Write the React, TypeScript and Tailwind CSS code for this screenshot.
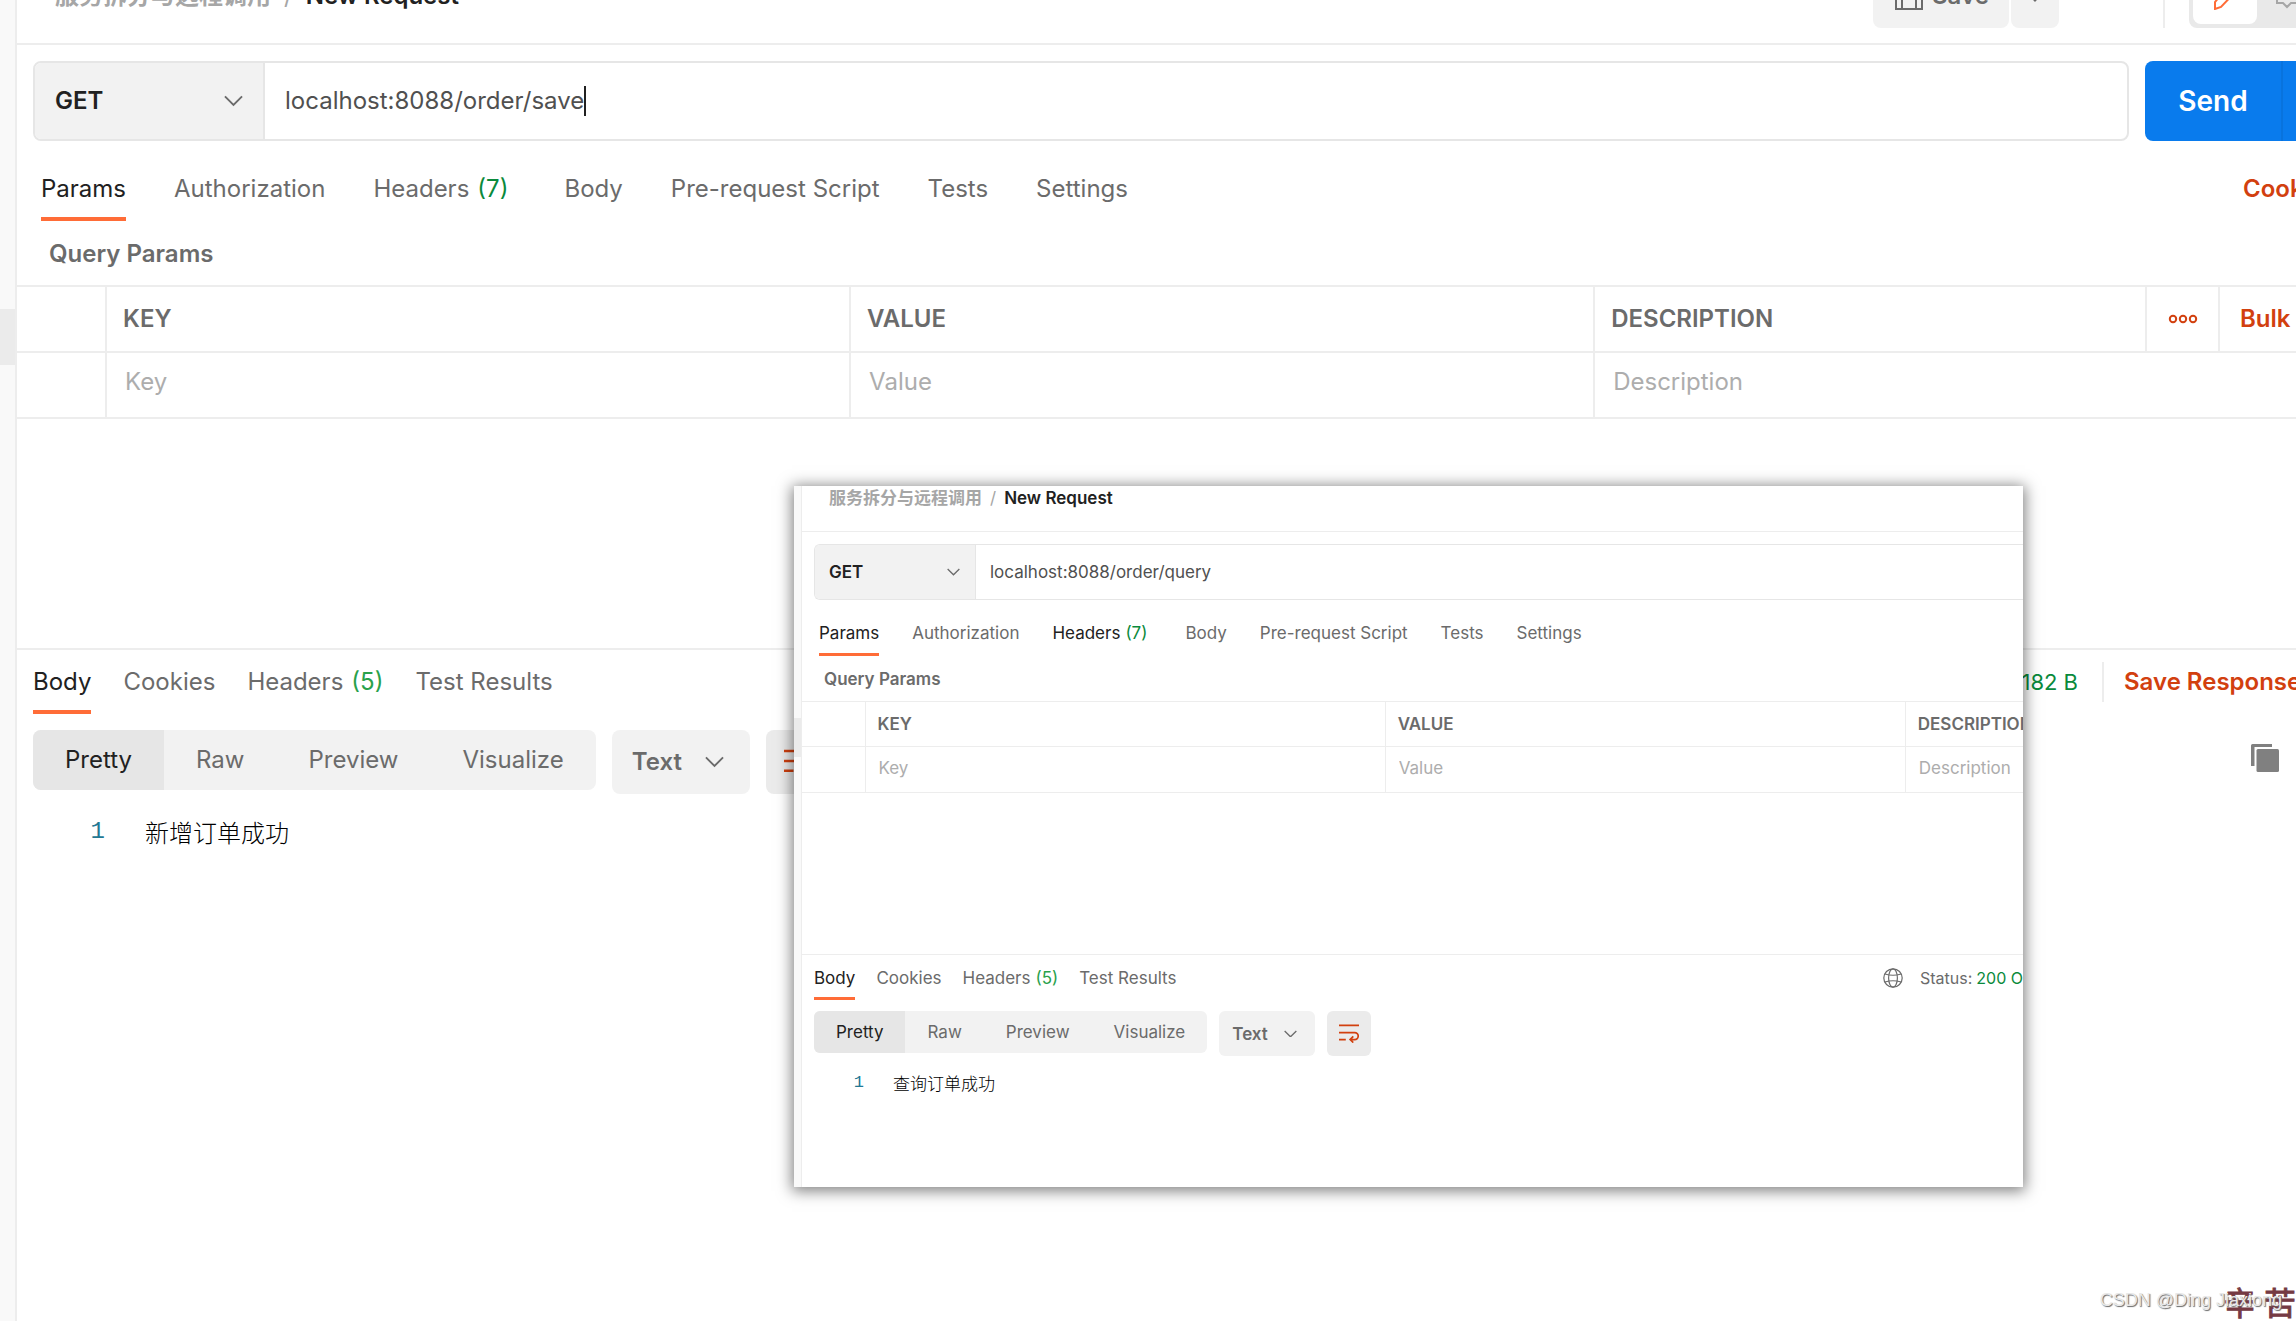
import React from 'react';

type Size = 'lg' | 'sm';

const sizes = {
  lg: {
    text: 'text-[24px] leading-[30px]',
    rail: 'w-[17px] border-r-2 pt-[309px]',
    thumb: 'h-[56px]',
    header: 'h-[45px] border-b-2 pb-[15px] pl-[38px]',
    crumbs: 'h-[64px] gap-[13px]',
    urlRow: 'mt-4 pl-4',
    urlBox: 'h-[80px] border-2 rounded-lg mr-4',
    method: 'w-[230px] border-r-2 px-5',
    methodChevron: 'right-[22px] w-[19px]',
    url: 'pl-5',
    tabs: 'mt-[14px] pl-[24px]',
    tabList: 'gap-12',
    tab: 'h-[66px] border-b-4 pt-[6px] gap-[8px]',
    counted: 'pr-2',
    section: 'h-[64px] pl-8 pt-[2px]',
    table: 'border-y-2',
    headRow: 'h-[66px] border-b-2',
    bodyRow: 'h-[66px]',
    cell: 'border-r-2',
    selectCol: 'w-[89px]',
    fieldCol: 'w-[32.65%]',
    headPad: 'pl-4',
    bodyPad: 'pl-[18px] pb-[6px]',
    gap: 'h-[231px] border-b-2',
    resTabs: 'pl-4',
    resTabList: 'gap-8',
    resTab: 'h-[64px] border-y-4 gap-[8px]',
    toolbar: 'mt-4 pl-4 gap-4',
    segmented: 'h-[60px] rounded-lg',
    segment: 'px-8',
    format: 'w-[138px] h-[64px] rounded-lg pl-5',
    formatChevron: 'right-[26px] w-[19px]',
    wrap: 'w-[64px] h-[64px] rounded-lg',
    wrapIcon: 'w-[28px]',
    code: 'mt-5 leading-[36px]',
    lineNo: 'w-[88px] text-[24px]',
    codeText: 'pl-[40px] text-[24px]',
  },
  sm: {
    text: 'text-[17px] leading-[22px]',
    rail: 'w-[8px] border-r pt-[232px]',
    thumb: 'h-[39px]',
    header: 'h-[46px] border-b pb-[11px] pl-[27px]',
    crumbs: 'h-[45px] gap-[8px]',
    urlRow: 'mt-3 pl-3',
    urlBox: 'h-[56px] border border-r-0 rounded-l-md',
    method: 'w-[161px] border-r px-[14px]',
    methodChevron: 'right-[16px] w-[13px]',
    url: 'pl-[14px]',
    tabs: 'mt-[10px] pl-[17px]',
    tabList: 'gap-[33px]',
    tab: 'h-[46px] border-y-3 gap-[5px]',
    counted: 'pr-[5px]',
    section: 'h-[45px] pl-[22px]',
    table: 'border-y',
    headRow: 'h-[45px] border-b',
    bodyRow: 'h-[46px]',
    cell: 'border-r',
    selectCol: 'w-[63px]',
    fieldCol: 'w-[42.6%]',
    headPad: 'pl-3',
    bodyPad: 'pl-[13px] pb-[4px]',
    gap: 'h-[162px] border-b',
    resTabs: 'pl-3',
    resTabList: 'gap-[21px]',
    resTab: 'h-[45px] border-y-3 gap-[5px]',
    toolbar: 'mt-[11px] pl-3 gap-3',
    segmented: 'h-[42px] rounded-md',
    segment: 'px-[22px]',
    format: 'w-[96px] h-[45px] rounded-md pl-[13px]',
    formatChevron: 'right-[18px] w-[13px]',
    wrap: 'w-[44px] h-[45px] rounded-md',
    wrapIcon: 'w-[20px]',
    code: 'mt-[14px] leading-[26px]',
    lineNo: 'w-[62px] text-[17px]',
    codeText: 'pl-[29px] text-[17px]',
  },
} as const;

function Chevron({ className }: { className: string }) {
  return (
    <svg viewBox="0 0 20 12" fill="none" stroke="#6b6b6b" strokeWidth="2" className={className} aria-hidden="true">
      <path d="M1 1.5 10 10.5 19 1.5" />
    </svg>
  );
}

function WrapIcon({ className }: { className: string }) {
  return (
    <svg viewBox="0 0 28 26" fill="none" stroke="#d2400f" strokeWidth="2.4" className={className} aria-hidden="true">
      <path d="M0 2h28M0 12h22a4.8 4.8 0 0 1 0 9.8h-6M0 21.8h9.5M20 17.4l-4.4 4.4 4.4 4.2" />
    </svg>
  );
}

function GlobeIcon() {
  return (
    <svg viewBox="0 0 20 20" fill="none" stroke="#6b6b6b" strokeWidth="1.2" className="h-5 w-5 shrink-0" aria-hidden="true">
      <circle cx="10" cy="10" r="9.2" />
      <ellipse cx="10" cy="10" rx="4.4" ry="9.2" />
      <path d="M2 6c4.500 1.400 11.500 1.400 16 0M2 14c4.500-1.400 11.500-1.400 16 0" />
    </svg>
  );
}

function TabButton({ size, label, count, active, hovered, response }: {
  size: Size; label: string; count?: number; active?: boolean; hovered?: boolean; response?: boolean;
}) {
  const s = sizes[size];
  return (
    <button
      type="button"
      role="tab"
      aria-selected={!!active}
      className={`flex items-center whitespace-nowrap border-transparent ${response ? s.resTab : s.tab} ${
        active ? 'border-b-[#ff6c37] text-[#212121]' : hovered ? 'text-[#212121]' : 'text-[#6b6b6b]'
      } ${count && !response ? s.counted : ''}`}
    >
      {label}
      {count && <span className={response ? 'text-[#29a14b]' : 'text-[#0a8a3c]'}>({count})</span>}
    </button>
  );
}

interface WorkspaceProps {
  size: Size;
  url: string;
  result: string;
  caret?: boolean;
  headersHovered?: boolean;
  headerActions?: React.ReactNode;
  send?: React.ReactNode;
  tabsEnd?: React.ReactNode;
  tableEnd?: React.ReactNode;
  responseEnd: React.ReactNode;
  toolbarEnd?: React.ReactNode;
}

function Workspace(p: WorkspaceProps) {
  const s = sizes[p.size];
  const requestTabs = ['Params', 'Authorization', 'Headers', 'Body', 'Pre-request Script', 'Tests', 'Settings'];
  const responseTabs = ['Body', 'Cookies', 'Headers', 'Test Results'];
  const cell = `border-[#ededed] ${s.cell}`;
  return (
    <div className={`flex w-full bg-white text-[#6b6b6b] ${s.text}`}>
      <aside className={`shrink-0 border-[#ededed] bg-[#f9f9f9] ${s.rail}`}>
        <div className={`bg-[#ebebeb] ${s.thumb}`} />
      </aside>
      <main className="min-w-0 flex-1">
        <header className={`flex items-end justify-between overflow-hidden border-[#ededed] ${s.header}`}>
          <nav className={`flex shrink-0 items-center font-semibold ${s.crumbs}`}>
            <a href="#collection" className="text-[#a6a6a6]">服务拆分与远程调用</a>
            <span className="font-normal text-[#a6a6a6]">/</span>
            <span className="text-[#212121]">New Request</span>
          </nav>
          {p.headerActions}
        </header>

        <div className={`flex ${s.urlRow}`}>
          <div className={`flex min-w-0 flex-1 overflow-hidden border-[#e6e6e6] ${s.urlBox}`}>
            <div className="relative flex shrink-0">
              <select aria-label="Method" className={`appearance-none border-[#e6e6e6] bg-[#f2f2f2] font-semibold text-[#212121] ${s.method}`}>
                <option>GET</option>
                <option>POST</option>
              </select>
              <Chevron className={`pointer-events-none absolute inset-y-0 my-auto ${s.methodChevron}`} />
            </div>
            <div className={`flex min-w-0 flex-1 items-center text-[#505050] ${s.url}`}>
              <input aria-label="Request URL" defaultValue={p.url} className="field-sizing-content outline-none" />
              {p.caret && <span className="h-[30px] w-[2px] bg-[#212121]" />}
            </div>
          </div>
          {p.send}
        </div>

        <div className={`flex justify-between ${s.tabs}`}>
          <div role="tablist" className={`flex ${s.tabList}`}>
            {requestTabs.map((t) => (
              <TabButton
                key={t}
                size={p.size}
                label={t}
                count={t === 'Headers' ? 7 : undefined}
                active={t === 'Params'}
                hovered={t === 'Headers' && p.headersHovered}
              />
            ))}
          </div>
          {p.tabsEnd}
        </div>

        <h2 className={`flex items-center font-semibold ${s.section}`}>Query Params</h2>

        <table className={`w-full table-fixed border-collapse border-[#ededed] text-left ${s.table}`}>
          <colgroup>
            <col className={s.selectCol} />
            <col className={s.fieldCol} />
            <col className={s.fieldCol} />
            <col />
            {p.tableEnd && <col className="w-[73px]" />}
            {p.tableEnd && <col className="w-[77px]" />}
          </colgroup>
          <thead>
            <tr className={`border-[#ededed] ${s.headRow}`}>
              <td className={cell} />
              <th className={`font-semibold ${cell} ${s.headPad}`}>KEY</th>
              <th className={`font-semibold ${cell} ${s.headPad}`}>VALUE</th>
              <th className={`overflow-hidden font-semibold ${p.tableEnd ? cell : ''} ${s.headPad}`}>DESCRIPTION</th>
              {p.tableEnd}
            </tr>
          </thead>
          <tbody>
            <tr className={s.bodyRow}>
              <td className={cell} />
              {['Key', 'Value', 'Description'].map((name, i) => (
                <td key={name} colSpan={i === 2 && p.tableEnd ? 3 : 1} className={`${i < 2 ? cell : ''} ${s.bodyPad}`}>
                  <input aria-label={name} placeholder={name} className="block w-full outline-none placeholder:text-[#adadad]" />
                </td>
              ))}
            </tr>
          </tbody>
        </table>

        <div className={`border-[#ededed] ${s.gap}`} />

        <div className={`flex items-center justify-between ${s.resTabs}`}>
          <div role="tablist" className={`flex ${s.resTabList}`}>
            {responseTabs.map((t) => (
              <TabButton key={t} size={p.size} label={t} count={t === 'Headers' ? 5 : undefined} active={t === 'Body'} response />
            ))}
          </div>
          {p.responseEnd}
        </div>

        <div className={`flex items-start ${s.toolbar}`}>
          <div className={`flex overflow-hidden bg-[#f2f2f2] ${s.segmented}`}>
            {['Pretty', 'Raw', 'Preview', 'Visualize'].map((t, i) => (
              <button key={t} type="button" className={`${s.segment} ${i === 0 ? 'bg-[#e6e6e6] text-[#212121]' : ''}`}>
                {t}
              </button>
            ))}
          </div>
          <div className="relative flex">
            <select aria-label="Format" className={`appearance-none bg-[#f2f2f2] font-semibold ${s.format}`}>
              <option>Text</option>
              <option>JSON</option>
            </select>
            <Chevron className={`pointer-events-none absolute inset-y-0 my-auto ${s.formatChevron}`} />
          </div>
          <button type="button" aria-label="Wrap lines" className={`flex items-center justify-center bg-[#ebebeb] ${s.wrap}`}>
            <WrapIcon className={s.wrapIcon} />
          </button>
          {p.toolbarEnd}
        </div>

        <div className={`flex ${s.code}`}>
          <span className={`text-right font-['Liberation_Mono',monospace] text-[#237893] ${s.lineNo}`}>1</span>
          <code className={`font-['Noto_Sans_CJK_SC',sans-serif] font-light text-black ${s.codeText}`}>{p.result}</code>
        </div>
      </main>
    </div>
  );
}

function HeaderActions() {
  return (
    <div className="flex h-[64px] shrink-0 font-semibold">
      <button type="button" className="flex w-[136px] items-center gap-[9px] rounded-lg bg-[#f2f2f2] pl-[22px]">
        <svg viewBox="0 0 28 28" fill="none" stroke="#6b6b6b" strokeWidth="2" className="w-[28px]" aria-hidden="true">
          <path d="M1 1h20l6 6v20H1zM7 27V14h14v13M8 1v6h10V1" />
        </svg>
        Save
      </button>
      <button type="button" aria-label="Save options" className="ml-[2px] flex w-[48px] items-center justify-center rounded-lg bg-[#f2f2f2]">
        <Chevron className="w-[20px]" />
      </button>
      <div className="ml-[104px] w-[2px] bg-[#ededed]" />
      <div className="ml-6 flex w-[107px] overflow-hidden rounded-bl-lg bg-[#e9e9e9] p-1 pr-0">
        <button type="button" aria-label="Edit" className="flex w-[64px] shrink-0 items-center justify-center rounded-lg bg-white">
          <svg viewBox="0 0 28 28" fill="none" stroke="#ff6c37" strokeWidth="2" className="w-[28px]" aria-hidden="true">
            <path d="M4 27v-7L20 1l7 6L10 25z" />
          </svg>
        </button>
        <button type="button" aria-label="Comments" className="flex w-[64px] shrink-0 items-center justify-center">
          <svg viewBox="0 0 28 28" fill="none" stroke="#a6a6a6" strokeWidth="2" className="w-[28px]" aria-hidden="true">
            <path d="M2 3h24v18H16l-4 4-4-4H2z" />
          </svg>
        </button>
      </div>
    </div>
  );
}

export default function App() {
  return (
    <div className="relative flex min-h-screen overflow-hidden bg-white font-['Inter','Noto_Sans_CJK_SC',sans-serif]">
      <Workspace
        size="lg"
        url="localhost:8088/order/save"
        result="新增订单成功"
        caret
        headerActions={<HeaderActions />}
        send={
          <div className="flex w-[151px] shrink-0 overflow-hidden rounded-l-lg bg-[#097bed] text-white">
            <button type="button" className="w-[136px] shrink-0 text-[28px] font-semibold">Send</button>
            <button type="button" aria-label="Send options" className="flex-1 border-l-2 border-[#0873de]" />
          </div>
        }
        tabsEnd={
          <a href="#cookies" className="flex w-[53px] items-center overflow-hidden pt-[2px] font-semibold text-[#d2400f]">Cookies</a>
        }
        tableEnd={
          <>
            <th className="border-r-2 border-[#ededed]">
              <button type="button" aria-label="More columns" className="flex w-full justify-center">
                <svg viewBox="0 0 30 10" fill="none" stroke="#d2400f" strokeWidth="2" className="w-[30px]" aria-hidden="true">
                  <circle cx="5" cy="5" r="3.2" />
                  <circle cx="15" cy="5" r="3.2" />
                  <circle cx="25" cy="5" r="3.2" />
                </svg>
              </button>
            </th>
            <th className="overflow-hidden whitespace-nowrap pl-5 font-semibold text-[#d2400f]">
              <button type="button">Bulk Edit</button>
            </th>
          </>
        }
        responseEnd={
          <div className="flex items-center">
            <span className="text-[22px] text-[#0a8a3c]">182 B</span>
            <div className="ml-6 h-[40px] w-[2px] bg-[#ededed]" />
            <button type="button" className="ml-5 w-[172px] overflow-hidden whitespace-nowrap text-left font-semibold text-[#d2400f]">
              Save Response
            </button>
          </div>
        }
        toolbarEnd={
          <button type="button" aria-label="Copy" className="ml-auto mr-[17px] mt-[14px]">
            <svg viewBox="0 0 28 28" fill="#808080" className="w-[28px]" aria-hidden="true">
              <path d="M1.500 0H21v3H3.500v19H0V1.500A1.500 1.500 0 0 1 1.500 0z" />
              <rect x="5.500" y="5" width="22.500" height="23" rx="1.500" />
            </svg>
          </button>
        }
      />

      <section
        aria-label="Second request"
        className="absolute left-[794px] top-[486px] flex h-[701px] w-[1229px] overflow-hidden bg-white shadow-[0_2px_14px_2px_rgba(0,0,0,0.5)]"
      >
        <Workspace
          size="sm"
          url="localhost:8088/order/query"
          result="查询订单成功"
          headersHovered
          responseEnd={
            <div className="flex w-[140px] shrink-0 items-center overflow-hidden whitespace-nowrap text-[16px]">
              <GlobeIcon />
              <span className="ml-[17px]">Status:</span>
              <span className="ml-[4px] text-[#0a8a3c]">200 OK</span>
            </div>
          }
        />
      </section>

      <div className="absolute bottom-[-4px] right-0 flex gap-[8px] font-['Noto_Sans_CJK_SC',sans-serif] text-[32px] leading-[48px] text-[#753a43] [-webkit-text-stroke:1px_#753a43]">
        <span>辛</span>
        <span>苦</span>
      </div>
      <div className="absolute bottom-[9px] right-[14px] font-['Liberation_Sans',sans-serif] text-[18px] leading-[24px] text-[#e8e8e8] [text-shadow:1px_1px_1px_#666]">
        CSDN @Ding Jiaxiong
      </div>
    </div>
  );
}
